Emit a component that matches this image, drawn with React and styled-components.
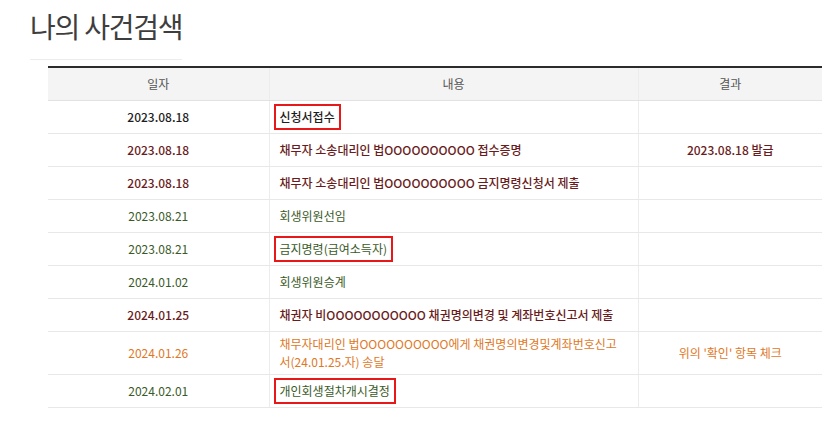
import React from 'react';
import styled, { createGlobalStyle } from 'styled-components';

const GlobalStyle = createGlobalStyle`
  body {
    margin: 0;
    background: #fff;
    font-family: "Noto Sans CJK KR", "Noto Sans", sans-serif;
  }
`;

const Page = styled.div`
  width: 835px;
  height: 428px;
  overflow: hidden;
`;

const TitleBlock = styled.div`
  padding: 6px 0 0 30px;
`;

const Title = styled.h1`
  margin: 0;
  font-size: 28px;
  font-weight: 400;
  letter-spacing: -1.2px;
  color: #3e3e3e;
  line-height: 40px;
`;

const TitleRule = styled.div`
  width: 152px;
  height: 1px;
  margin-top: 13px;
  background: #ececec;
`;

const Table = styled.table`
  margin: 6px 0 0 48px;
  width: 774px;
  border-collapse: collapse;
  border-top: 2px solid #2b2b2b;
  font-size: 12px;
  line-height: 18px;
`;

const Th = styled.th`
  height: 32px;
  padding: 0;
  background: #f4f4f4;
  color: #555;
  font-weight: 400;
  border-bottom: 1px solid #e2e2e2;
  border-left: 1px solid #ececec;
  &:first-child { border-left: none; }
`;

const colors = {
  black: '#1e1e1e',
  red: '#6a1c1c',
  green: '#3a5a28',
  orange: '#e0781f',
};

const Td = styled.td`
  height: 33px;
  padding: 3px 10px;
  box-sizing: border-box;
  border-bottom: 1px solid #e8e8e8;
  border-left: 1px solid #ececec;
  text-align: ${p => (p.$left ? 'left' : 'center')};
  color: ${p => colors[p.$tone]};
  font-weight: ${p => (p.$bold ? 500 : 400)};
  &:first-child { border-left: none; }
`;

const Marked = styled.span`
  display: inline-block;
  margin-left: -6px;
  padding: 2px 4px;
  border: 2px solid #e81818;
`;

const rows = [
  { date: '2023.08.18', text: '신청서접수', tone: 'black', bold: true, boxed: true },
  { date: '2023.08.18', text: '채무자 소송대리인 법OOOOOOOOOO 접수증명', result: '2023.08.18 발급', tone: 'red', bold: true },
  { date: '2023.08.18', text: '채무자 소송대리인 법OOOOOOOOOO 금지명령신청서 제출', tone: 'red', bold: true },
  { date: '2023.08.21', text: '회생위원선임', tone: 'green' },
  { date: '2023.08.21', text: '금지명령(급여소득자)', tone: 'green', boxed: true },
  { date: '2024.01.02', text: '회생위원승계', tone: 'green' },
  { date: '2024.01.25', text: '채권자 비OOOOOOOOOOO 채권명의변경 및 계좌번호신고서 제출', tone: 'red', bold: true },
  { date: '2024.01.26', text: ['채무자대리인 법OOOOOOOOOO에게 채권명의변경및계좌번호신고', '서(24.01.25.자) 송달'], result: "위의 '확인' 항목 체크", tone: 'orange' },
  { date: '2024.02.01', text: '개인회생절차개시결정', tone: 'green', boxed: true },
];

export default function App() {
  return (
    <Page>
      <GlobalStyle />
      <TitleBlock>
        <Title>나의 사건검색</Title>
        <TitleRule />
      </TitleBlock>
      <Table>
        <colgroup>
          <col style={{ width: 221 }} />
          <col style={{ width: 369 }} />
          <col style={{ width: 184 }} />
        </colgroup>
        <thead>
          <tr>
            <Th>일자</Th>
            <Th>내용</Th>
            <Th>결과</Th>
          </tr>
        </thead>
        <tbody>
          {rows.map((r, i) => (
            <tr key={i}>
              <Td $tone={r.tone} $bold={r.bold}>{r.date}</Td>
              <Td $left $tone={r.tone} $bold={r.bold}>
                {r.boxed ? (
                  <Marked>{r.text}</Marked>
                ) : Array.isArray(r.text) ? (
                  r.text.map((t, j) => <div key={j}>{t}</div>)
                ) : (
                  r.text
                )}
              </Td>
              <Td $tone={r.tone} $bold={r.bold}>{r.result || ''}</Td>
            </tr>
          ))}
        </tbody>
      </Table>
    </Page>
  );
}
